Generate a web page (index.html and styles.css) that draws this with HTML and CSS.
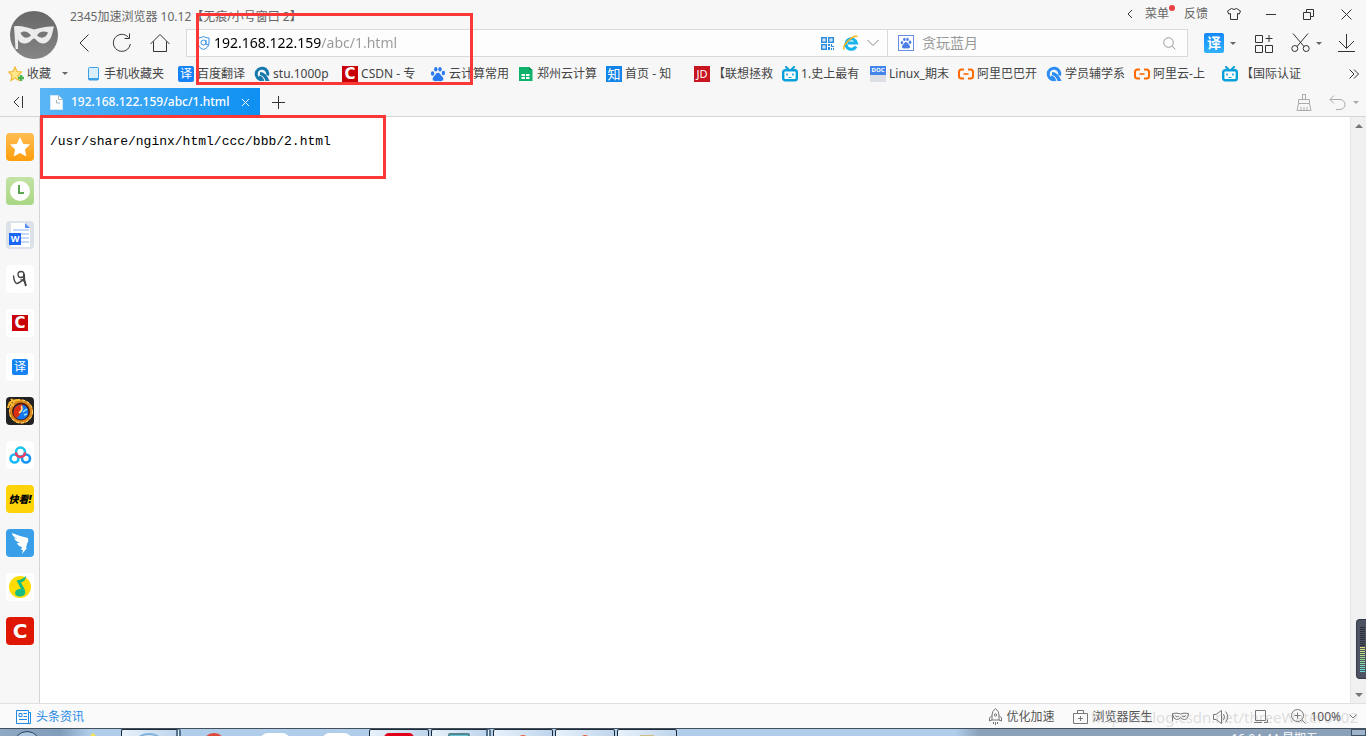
FILE: index.html
```html
<!DOCTYPE html>
<html lang="zh-CN">
<head>
<meta charset="utf-8">
<title>192.168.122.159/abc/1.html</title>
<link rel="stylesheet" href="styles.css">
</head>
<body>
<svg class="defs" aria-hidden="true">
  <symbol id="bili" viewBox="0 0 16 16"><path d="M4 1l2.500 2.500M12 1L9.500 3.500" stroke="#08a0d8" stroke-width="2" stroke-linecap="round"/><rect x="1.200" y="4.200" width="13.600" height="10" rx="2" fill="#fff" stroke="#08a0d8" stroke-width="2.400"/><path d="M5 7.500v2M11 7.500v2" stroke="#08a0d8" stroke-width="1.600"/><path d="M6.500 11.500h3" stroke="#08a0d8"/></symbol>
  <symbol id="ali" viewBox="0 0 16 16"><path d="M6 3.500H3.500Q1 3.500 1 6v4q0 2.500 2.500 2.500H6M10 3.500h2.500Q15 3.500 15 6v4q0 2.500-2.500 2.500H10" fill="none" stroke="#ff6a00" stroke-width="2"/><path d="M5.500 8h5" stroke="#ff6a00" stroke-width="1.600"/></symbol>
  <symbol id="quan" viewBox="0 0 16 16"><path d="M8 13.800A5.800 5.800 0 1 1 13.600 9.500" fill="none" stroke="currentColor" stroke-width="3"/><path d="M6 6q6 0 9.500 9h-4Q10 10 6 9z" fill="currentColor"/><path d="M5 10.500q3 .5 4.500 4.500" stroke="currentColor" stroke-width="1.800" fill="none"/></symbol>
  <symbol id="paw" viewBox="0 0 16 16"><g fill="currentColor"><ellipse cx="2.600" cy="7.500" rx="1.700" ry="2.200"/><ellipse cx="5.800" cy="3.200" rx="1.700" ry="2.200"/><ellipse cx="10" cy="3.200" rx="1.700" ry="2.200"/><ellipse cx="13.400" cy="7" rx="1.700" ry="2.200"/><path d="M8 6.800c2 0 2.500 2.200 4 3.500 3 3 .5 5.200-1.500 4.900q-2.500-.5-5 0c-2 .3-4.500-1.900-1.500-4.900 1.500-1.300 2-3.500 4-3.500z"/></g></symbol>
</svg>

<header class="chrome">
  <div class="top">
    <svg class="avatar" viewBox="0 0 48 48"><defs><linearGradient id="av" x2="0" y2="1"><stop stop-color="#686868"/><stop offset="1" stop-color="#858585"/></linearGradient></defs><circle cx="24" cy="24" r="24" fill="url(#av)"/><path fill-rule="evenodd" fill="#ececec" d="M4 15.500C10 14 18 17 24 18.500 30 17 37 15 44 15.500 42.500 20 42 31 34 32.500 28 33 26.500 28 24 27.500 21.500 28 20 33 14 32.500 10 32 8.500 30 8 28V38H5.500zM10.500 22C13 27.500 17 28 21 24.500 18 20 13 19.500 10.500 22zM27 24.500C31 28 36 27.500 38 21.500 34 19.500 29 20.500 27 24.500z"/></svg>
    <div class="top-rows">
      <div class="title-row">
        <span class="app-title">2345加速浏览器 10.12【无痕/小号窗口 2】</span>
        <div class="window-tools">
          <button aria-label="收起"><svg width="6" height="10"><path d="M5 1L1 5l4 4"/></svg></button>
          <button class="menu">菜单<i class="dot"></i></button>
          <button class="feedback">反馈</button>
          <button class="shirt" aria-label="皮肤"><svg width="14" height="12"><path d="M4.500.5q2.500 2 5 0L13.500 3l-1.200 3-1.800-.5v6h-7v-6L1.700 6 .5 3z"/></svg></button>
          <button class="wmin" aria-label="最小化"><svg width="10" height="12"><path d="M0 6.500h10"/></svg></button>
          <button class="wmax" aria-label="还原"><svg width="11" height="11"><path d="M.5 3.500h7v7h-7zM3.500 3V.5h7v7H8"/></svg></button>
          <button class="wclose" aria-label="关闭"><svg width="11" height="11"><path d="M.5.5l10 10M10.500.5l-10 10"/></svg></button>
        </div>
      </div>
      <div class="nav-row">
        <button aria-label="后退"><svg width="12" height="20"><path d="M10.500 1.500L2 10l8.500 8.500"/></svg></button>
        <button class="reload" aria-label="刷新"><svg width="20" height="20"><path d="M16.500 4.500A8.500 8.500 0 1 0 18.300 11M17.500.5v5h-5"/></svg></button>
        <button class="home" aria-label="主页"><svg width="20" height="20"><path d="M.5 11L10 1.500l9.500 9.500M3.500 8.500v10h13v-10"/></svg></button>
        <div class="bar">
          <div class="url">
            <svg class="shield" width="13" height="14" viewBox="0 0 13 14"><path d="M1 2q3 0 5.500-1.500Q9 2 12 2v5q0 4.500-5.500 6.500Q1 11.500 1 7z"/><circle cx="6.500" cy="6.500" r="2.500"/><path d="M9 4v4q1 1.500 2.500 0"/></svg>
            <input class="url-input" aria-label="地址" value="192.168.122.159/abc/1.html">
            <svg class="qr" width="13" height="13"><path d="M.75.75h4.500v4.500H.750zM7.750.75h4.500v4.500h-4.500zM.75 7.750h4.500v4.500H.75z" fill="none" stroke="#2b8be0" stroke-width="1.500"/><path d="M2.500 2.500h1v1h-1zM9.500 2.500h1v1h-1zM2.500 9.500h1v1h-1zM7 7h2v2H7zM10 7h1v2h2v1h-3zM7 10h2v3H7zM10 11h1v2h-1zM12 11h1v2h-1z" fill="#2b8be0"/></svg>
            <svg class="ie" width="16" height="16"><path d="M13 11.500A5.300 5.300 0 1 1 13.500 8H5" fill="none" stroke="#18b4ee" stroke-width="3"/><path d="M1.500 14.500Q-1 12 5 6T14.500 1.500" fill="none" stroke="#f6b61b" stroke-width="1.500"/></svg>
            <svg class="line" width="12" height="8"><path d="M.5 1L6 6.500 11.500 1" stroke="#888"/></svg>
          </div>
          <label class="search">
            <span class="engine"><svg width="12" height="12"><use href="#paw"/></svg></span>
            <input type="search" aria-label="搜索" placeholder="贪玩蓝月">
            <svg class="line" width="13" height="13"><g stroke="#999"><circle cx="5.500" cy="5.500" r="4.800"/><path d="M9 9l3.500 3.500"/></g></svg>
          </label>
        </div>
        <button class="translate">译</button><i class="caret c1"></i>
        <button class="apps" aria-label="应用"><svg width="19" height="19"><path d="M1.500 1.500h7v7h-7zM1.500 11.500h7v7h-7zM11.500 11.500h7v7h-7zM15 1v7M11.500 4.500h7"/></svg></button>
        <button class="cut" aria-label="截图"><svg width="19" height="20"><path d="M2 .5l11 13M17 .5l-11 13"/><circle cx="3.800" cy="15.500" r="3"/><circle cx="15.200" cy="15.500" r="3"/></svg></button><i class="caret c2"></i>
        <button class="down" aria-label="下载"><svg width="17" height="19"><path d="M8.500 0v14M1 7l7.500 7.500L16 7M0 17.500h17"/></svg></button>
      </div>
    </div>
  </div>

  <nav class="bookmarks">
    <button class="fav"><svg width="17" height="16"><path d="M7 1l2 4.500 4.500.5L10 9.500l1 5-4-2.500-4 2.500 1-5L.8 6l4.300-.5z" fill="#ffe98a" stroke="#f5b93a" stroke-width="1.200"/><path d="M13 9v6M10 12h6" stroke="#4db34f" stroke-width="2.400"/></svg>收藏<i class="caret"></i></button>
    <a class="phone" href="#"><svg width="11" height="14"><rect x=".5" y=".5" width="10" height="12.500" rx="1" fill="#d9effd" stroke="#3b9fe8"/><path d="M1 11h9v2H1z" fill="#3b9fe8"/></svg>手机收藏夹</a>
    <a class="first" href="#"><span class="sq blue">译</span>百度翻译</a>
    <div class="links">
      <a href="#"><svg width="16" height="16" color="#1679ad"><use href="#quan"/></svg>stu.1000p</a>
      <a href="#"><span class="sq csdn">C</span>CSDN - 专</a>
      <a href="#"><svg width="16" height="16" color="#2b7bf0"><use href="#paw"/></svg>云计算常用</a>
      <a href="#"><svg width="16" height="16"><path d="M1 1h10l3.500 3v11H1z" fill="#0eb26b"/><path d="M11 1v3h3.500z" fill="#0a8b52"/><path d="M3.500 8h8v5h-8z" fill="#fff"/><path d="M3 10.500h9M7.500 8v5" stroke="#0eb26b"/></svg>郑州云计算</a>
      <a href="#"><span class="sq zhi">知</span>首页 - 知</a>
      <a href="#"><span class="sq jd">JD</span>【联想拯救</a>
      <a href="#"><svg width="16" height="16"><use href="#bili"/></svg>1.史上最有</a>
      <a href="#"><span class="doc">DOC</span>Linux_期末</a>
      <a href="#"><svg width="16" height="16"><use href="#ali"/></svg>阿里巴巴开</a>
      <a href="#"><svg width="16" height="16" color="#2c8df4"><use href="#quan"/></svg>学员辅学系</a>
      <a href="#"><svg width="16" height="16"><use href="#ali"/></svg>阿里云-上</a>
      <a href="#"><svg width="16" height="16"><use href="#bili"/></svg>【国际认证</a>
    </div>
    <button class="more" aria-label="更多"><svg width="10" height="10"><path d="M.5.500L5 5 .5 9.500M5 .5L9.500 5 5 9.500"/></svg></button>
  </nav>

  <div class="tabs">
    <button class="collapse" aria-label="侧栏"><svg width="12" height="12"><path d="M6 1L1 6l5 5M9.500 0v12"/></svg></button>
    <div class="tab">
      <svg width="13" height="15"><path d="M.5.500h8l4 4v10H.5z" fill="#fff" stroke="#d5e8f8"/><path d="M6.500 5v3H10M8.500.5v4h4" fill="none" stroke="#aab4bb"/></svg>
      <span>192.168.122.159/abc/1.html</span>
      <button aria-label="关闭标签"><svg width="7" height="7"><path d="M0 0l7 7M7 0L0 7" stroke="#fff"/></svg></button>
    </div>
    <button class="plus" aria-label="新标签"><svg width="13" height="13"><path d="M6.500 0v13M0 6.500h13"/></svg></button>
    <div class="tab-tools">
      <button aria-label="清理"><svg width="16" height="17"><path d="M6.500 5V.500h3V5M2.500 9.500V5.500h11v4zM2.500 9.500l-1.500 7h14l-1.500-7M5 16v-3M8 16v-3M11 16v-3"/></svg></button>
      <button class="undo" aria-label="恢复"><svg width="17" height="15"><path d="M5 .5l-4 4 4 4M1 4.500h10a5 5 0 0 1 0 10H7"/></svg></button><i class="caret"></i>
    </div>
  </div>
  <div class="mark mark-url"></div>
</header>

<div class="middle">
  <aside class="side">
    <button class="s-star" aria-label="收藏"><svg width="28" height="28"><path d="M14 4l3.100 6.700 7 .8-5.200 4.900 1.500 7.200L14 20l-6.400 3.600 1.500-7.200L4 11.500l7-.8z" fill="#fff"/></svg></button>
    <button class="s-clock" aria-label="历史"><svg width="28" height="28"><circle cx="14" cy="14" r="10" fill="#fff"/><path d="M13 8v8h5" fill="none" stroke="#5aa452" stroke-width="2"/></svg></button>
    <button class="s-word"><svg width="28" height="28"><path d="M5 2h14l5 5v19H5z" fill="#fff"/><path d="M19 2v5h5z" fill="#558ef7"/><path d="M7 9h16M13 13h10M15 17h8M15 21h8" stroke="#c4d8fc" stroke-width="2"/></svg><span>W</span></button>
    <button aria-label="手写"><svg width="28" height="28"><g stroke="#444"><circle cx="15" cy="9.500" r="3" stroke-width="1.300"/><path d="M7.500 10.500Q8 17 10.500 18.500 14 18 18 13.500" stroke-width="1.400"/><path d="M18 9q-.5 6 2 12" stroke-width="2"/><path d="M14.500 14.500l5 2.500" stroke-width="1.300"/></g></svg></button>
    <button><span class="sq csdn">C</span></button>
    <button><span class="sq blue">译</span></button>
    <button class="s-game" aria-label="游戏"><svg width="28" height="28"><circle cx="15" cy="14.500" r="10.500" fill="#4f1b08" stroke="#d9861c" stroke-width="3"/><circle cx="15" cy="14.500" r="11.500" stroke="#ffe27a" stroke-dasharray="3 2"/><circle cx="15" cy="15" r="7.500" fill="#1277ed"/><path d="M8 19q-2-10 8-12 2 4-1 8-2 5-5 6z" fill="#df2d12"/><path d="M15 9q3 3-2 7" stroke="#fff0a0" stroke-width="1.500"/><path d="M2 11Q3 2 14 3M3 5l5 4M5 2l3 3" stroke="#ffb92d" stroke-width="2"/><path d="M17 15l4-3M18 18l3-1" stroke="#9de2ff" stroke-width="1.500"/></svg></button>
    <button aria-label="网盘"><svg width="28" height="28"><g stroke-width="2.600"><circle cx="8.500" cy="17.500" r="4" stroke="#16b9f5"/><circle cx="20" cy="17.500" r="4" stroke="#1495ef"/><circle cx="14.500" cy="11" r="4.500" stroke="#18c3ee"/><path d="M10 11.500a4.500 4.500 0 0 0 9 0" stroke="#f5395f"/></g></svg></button>
    <button class="s-kk">快看!</button>
    <button class="s-wing" aria-label="钉钉"><svg width="28" height="28"><path d="M6 4q7 3 16 5 1 3-1 6l-1 4h1l-5 6 1-4h-2l1-3q-4-1-5-4l3 0q-5-2-6-5l3 1Q6 7 6 4z" fill="#fff"/></svg></button>
    <button aria-label="音乐"><svg width="28" height="28"><circle cx="14" cy="14" r="11" fill="#ffdc00"/><path d="M10.500 7.500q5-.5 9.500-4.500 0 5-5 6.500l4 7.500q1.500 6-5 6.500-5 0-5-4 1-4 6-3.500z" fill="#16bc86"/></svg></button>
    <button class="s-red">C</button>
  </aside>
  <main class="page"><p>/usr/share/nginx/html/ccc/bbb/2.html</p><div class="mark mark-path"></div></main>
  <div class="scroll"><i class="up"></i><i class="down-arrow"></i><div class="meter"><i></i></div></div>
</div>

<footer class="status">
  <a href="#"><svg width="15" height="14"><path d="M.5.500h12v13H.5zM13 2.500h1.500v11H12M3 3.500h3v3H3zM7.500 3.500H11M7.500 6.500H11M3 9.500h8" stroke="#1e88e5"/></svg>头条资讯</a>
  <div class="status-tools">
    <button><svg width="13" height="17"><path d="M6.500.5Q3 3 3 7v5h7V7Q10 3 6.500.500zM3 7.500L.5 10v3L3 12M10 7.500l2.500 2.500v3L10 12M4.500 14v2M6.500 14v3M8.500 14v2"/><circle cx="6.500" cy="7" r="1.200"/></svg>优化加速</button>
    <button class="doctor"><svg width="15" height="14"><path d="M.5 3.500h14v10H.5zM4.500 3.500v-3h6v3M7.500 6v5M5 8.500h5"/></svg>浏览器医生</button>
    <button class="st-mask" aria-label="无痕"><svg width="17" height="10"><path d="M.5 9V1.500q5-1 8 .5 3-1.500 8-.5-.5 6-4 6-2.500 0-4-2-1.500 2-4 2Q1.500 7.500.5 2M3 3.500q2 2.500 4 .5M10 4q2 2 4-.5"/></svg></button>
    <button class="st-sound" aria-label="声音"><svg width="16" height="14"><path d="M.5 4.500H3L8.500.5v13L3 9.500H.5zM10.500 4q2 3 0 6M12.500 1.500q4.500 5 0 11"/></svg></button>
    <button class="st-page" aria-label="窗口"><svg width="14" height="13"><path d="M1.500.5h10v10h-10zM0 12.500h8M10 12.500h3.500v-3"/></svg></button>
    <button class="zoom"><svg width="15" height="15"><circle cx="6.500" cy="6.500" r="6"/><path d="M6.500 3.500v6M3.500 6.500h6M11 11l3.500 3.500"/></svg>100%<svg width="8" height="5"><path d="M.5.5L4 4 7.500.5"/></svg></button>
  </div>
  <span class="watermark">https://blog.csdn.net/threeWater0402</span>
</footer>

<div class="taskbar">
  <i class="orb"></i><i class="tip"></i>
  <i class="task stack t1"><b></b></i>
  <i class="blob red"></i><i class="blob"></i><i class="blob"></i>
  <div class="tasks">
    <i class="task"><b class="crimson"></b></i>
    <i class="task stack"><b class="teal"></b></i>
    <i class="task"><b class="orange"></b></i>
    <i class="task"><b class="orange"></b></i>
    <i class="task"><b class="khaki"></b></i>
  </div>
  <span class="clock">16:04:44 星期五</span>
  <i class="peek"></i>
</div>
</body>
</html>
```

FILE: styles.css
```css
* { box-sizing: border-box; }
body {
  margin: 0; height: 100vh; overflow: hidden; display: flex; flex-direction: column;
  background: #f7f7f7; color: #444;
  font: 12px/16px "Noto Sans", "Noto Sans CJK SC", sans-serif;
}
.defs { position: absolute; width: 0; height: 0; }
button, input { font: inherit; color: inherit; border: 0; background: none; padding: 0; margin: 0; outline: 0; }
button { display: flex; align-items: center; white-space: nowrap; }
svg { display: block; flex: none; }
button > svg, .line { fill: none; stroke: #333; }
a { display: flex; align-items: center; gap: 3px; color: inherit; text-decoration: none; white-space: nowrap; }
.caret { flex: none; border: 3px solid transparent; border-top-color: #666; border-bottom: 0; }
.mark { position: absolute; border: 3px solid #fb3838; pointer-events: none; z-index: 2; }
.sq { width: 16px; height: 16px; flex: none; color: #fff; text-align: center; line-height: 16px; }
.blue { background: #1683f5; border-radius: 2px; }
.csdn { background: #c90006; font: bold 15px/16px "DejaVu Sans", sans-serif; }
.zhi { background: #1283e8; font-size: 13px; }
.jd { background: #c81522; font-size: 11px; }
.doc { width: 16px; height: 16px; flex: none; color: #fff; font: bold 6px/9px "Open Sans", sans-serif; text-align: center; background: linear-gradient(#4385e8 9px, #dcdfe3 9px); }

/* window header */
.chrome { position: relative; flex: none; border-bottom: 1px solid #d5d5d5; }
.mark-url { left: 196px; top: 13px; width: 277px; height: 72px; }
.top { display: flex; padding-left: 10px; height: 58px; }
.avatar { width: 48px; height: 48px; margin-top: 11px; }
.top-rows { flex: 1; min-width: 0; margin-left: 12px; }
.title-row { display: flex; height: 28px; justify-content: space-between; color: #666; }
.app-title { margin-top: 9px; }
.window-tools { display: flex; align-items: center; padding-right: 14px; }
.menu { position: relative; margin-left: 12px; }
.dot { position: absolute; right: -6px; top: -1px; width: 6px; height: 6px; border-radius: 50%; background: #ec4040; }
.feedback { margin-left: 15px; }
.shirt { margin-left: 19px; }
.wmin { margin-left: 25px; }
.wmax { margin-left: 27px; }
.wclose { margin-left: 27px; }
.nav-row { display: flex; align-items: center; padding: 0 11px 0 8px; height: 30px; }
.reload { margin-left: 22px; }
.home { margin-left: 18px; }
.bar { flex: 1; min-width: 0; display: flex; height: 28px; margin: 0 16px; border: 1px solid #d9d9d9; background: #fdfdfd; }
.url { flex: 1; min-width: 0; display: flex; align-items: center; padding: 0 8px 0 10px; }
.shield { fill: none; stroke: #3993e4; }
.url-input {
  flex: 1; min-width: 0; margin-left: 4px; font-size: 14px; line-height: 20px;
  color: transparent; background: linear-gradient(90deg, #000 107px, #999 107px); background-clip: text; -webkit-background-clip: text;
}
.ie { margin: 0 8px 0 9px; }
.search { width: 300px; flex: none; display: flex; align-items: center; border-left: 1px solid #d9d9d9; padding: 0 11px 0 10px; }
.engine { width: 16px; height: 16px; border: 1px solid #6a8ee8; color: #4d7ee8; padding: 1px; }
.search input { flex: 1; min-width: 0; font-size: 14px; margin-left: 8px; }
.search input::placeholder { color: #999; opacity: 1; }
.translate { width: 20px; height: 20px; justify-content: center; color: #fff; background: linear-gradient(#1488fb, #31b2f9); border-radius: 2px; font-size: 14px; font-weight: bold; }
.c1 { margin-left: 6px; }
.apps { margin-left: 18px; }
.cut { margin-left: 18px; }
.c2 { margin-left: 6px; }
.down { margin-left: 16px; }

/* bookmarks */
.bookmarks { display: flex; align-items: center; height: 30px; padding: 1px 7px 0 8px; }
.fav { gap: 2px; }
.fav .caret { margin-left: 9px; }
.phone { margin-left: 20px; gap: 5px; }
.first { margin-left: 14px; }
.links { flex: 1; min-width: 0; display: flex; gap: 8px; margin-left: 9px; overflow: hidden; }
.links a { flex: 0 0 80px; }
.more { flex: none; }

/* tabs */
.tabs { display: flex; align-items: center; height: 28px; padding: 0 7px 0 13px; }
.tab { display: flex; align-items: center; width: 220px; height: 28px; margin-left: 15px; padding: 0 11px 0 10px; color: #fff; font-weight: 500; background: linear-gradient(90deg, #5ab5f5, #0d90f2); }
.tab span { flex: 1; margin-left: 8px; }
.plus { margin-left: 12px; }
.tab-tools { display: flex; align-items: center; margin-left: auto; }
.tab-tools svg { stroke: #aaa; }
.tab-tools .caret { margin-left: 7px; border-top-color: #aaa; }
.undo { margin-left: 17px; }

/* body of the window */
.middle { flex: 1; min-height: 0; display: flex; }
.side { width: 40px; border-right: 1px solid #d5d5d5; display: flex; flex-direction: column; gap: 16px; padding: 16px 0 0 6px; }
.side button { position: relative; flex: none; width: 28px; height: 28px; justify-content: center; border-radius: 4px; background: #fff; overflow: hidden; }
.side svg { stroke: none; }
.side .s-star { background: linear-gradient(#ffbd54, #ff9e0c); }
.side .s-clock { background: linear-gradient(#c3e3a6, #a9d783); }
.side .s-word { background: #dce1ea; }
.s-word span { position: absolute; left: 3px; top: 12px; width: 12px; height: 12px; background: #1b66f5; color: #fff; font: bold 9px/12px "Open Sans", sans-serif; }
.side .s-game { background: #222; }
.side .s-kk { background: #ffd30a; color: #000; font-size: 10px; font-weight: 900; font-style: italic; }
.side .s-wing { background: #3a9fe9; }
.side .s-red { background: #df1700; color: #fff; font: bold 20px/28px "DejaVu Sans", sans-serif; }
.page { position: relative; flex: 1; min-width: 0; background: #fff; padding: 17px 10px; }
.page p { margin: 0; color: #000; font: 13px/16px "Liberation Mono", monospace; }
.mark-path { left: 0; top: -2px; width: 346px; height: 64px; }
.scroll { position: relative; width: 16px; background: #f0f0f0; border-left: 1px solid #e6e6e6; display: flex; flex-direction: column; justify-content: space-between; align-items: center; padding: 7px 0 6px; }
.up, .down-arrow { border: 4px solid transparent; }
.up { border-top: 0; border-bottom-color: #777; }
.down-arrow { border-bottom: 0; border-top-color: #777; }
.meter { position: absolute; right: 0; bottom: 24px; width: 10px; height: 60px; padding: 7px 1px 7px 3px; background: #4d5362; border: 1px solid #353a46; border-right: 0; border-radius: 4px 0 0 4px; }
.meter i { display: block; height: 45px; background: repeating-linear-gradient(transparent 0 1px, #4d5362 1px 2px), linear-gradient(#2b2f3a 45%, #e4e080 45%, #9be08c 70%, #67e0d8); }

/* status bar */
.status { position: relative; flex: none; display: flex; justify-content: space-between; height: 25px; padding: 1px 9px 0 16px; border-top: 1px solid #e0e0e0; background: #fafafa; color: #555; }
.status > a { color: #1e88e5; gap: 5px; }
.status > a svg { fill: none; }
.status-tools { display: flex; align-items: center; }
.status-tools button { gap: 4px; }
.status-tools svg { stroke: #777; }
.doctor { margin-left: 19px; }
.st-mask { margin-left: 20px; }
.st-sound { margin-left: 24px; }
.st-page { margin-left: 25px; }
.zoom { margin-left: 23px; }
.zoom svg:last-child { margin-left: 4px; }
.watermark { position: absolute; right: 8px; top: 3px; font-size: 15px; line-height: 20px; color: rgba(150, 150, 150, .3); pointer-events: none; }

/* clipped system task bar */
.taskbar { flex: none; display: flex; height: 8px; overflow: hidden; border-top: 1px solid #444f5c; background: linear-gradient(90deg, #8fa9c4 0, #7f9cba 60px, #b0cdea 90px, #b0cdea 955px, #8aa1b9 980px); }
.taskbar i { flex: none; }
.orb { width: 28px; height: 28px; margin: 2px 0 0 13px; border-radius: 50%; border: 1px solid #26435f; background: #a9c4dc; }
.tip { margin: 4px 0 0 48px; width: 8px; border: 4px solid transparent; border-top: 0; border-bottom-color: #f4e64c; }
.task { display: flex; justify-content: center; width: 60px; height: 12px; padding-top: 3px; border: 1px solid #1d2a38; border-radius: 2px 2px 0 0; background: linear-gradient(90deg, #e8f1fa, #bfd5ec); }
.task.stack { border-right: 5px double #54718e; }
.t1 { margin-left: 24px; }
.task b { width: 24px; height: 14px; border-radius: 50%; border: 2px solid #7fb2da; }
.blob { width: 30px; height: 20px; margin: 4px 0 0 32px; border-radius: 8px; background: #fff; }
.blob.red { width: 22px; margin-left: 22px; border-radius: 50%; background: #dc4b3c; }
.blob.red + .blob { margin-left: 35px; }
.tasks { display: flex; gap: 2px; margin-left: 17px; }
.task b.crimson { width: 30px; border: 0; border-radius: 5px; background: #e2001b; }
.task b.teal { width: 22px; border-color: #55868f; border-radius: 2px; background: #62c4d8; }
.task b.orange { width: 12px; margin-top: 2px; border: 0; background: #ee5a32; }
.task b.khaki { width: 14px; margin-top: 2px; border: 0; border-radius: 0; background: #c9bd85; }
.clock { margin: 2px 33px 0 auto; color: #fff; }
.peek { width: 15px; border: 1px solid #3e5265; background: #9fb4ca; }
```
